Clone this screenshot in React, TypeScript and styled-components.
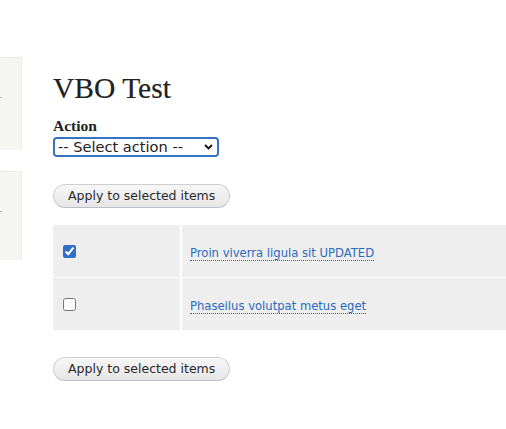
import { createGlobalStyle } from "styled-components";
import styled from "styled-components";

const GlobalStyle = createGlobalStyle`
  html, body {
    margin: 0;
    padding: 0;
    background: #ffffff;
    overflow: hidden;
  }
  body {
    font-family: "DejaVu Sans", Verdana, sans-serif;
    color: #222;
  }
`;

const Page = styled.div`
  display: flex;
  width: 506px;
  min-height: 429px;
`;

const Sidebar = styled.aside`
  width: 22px;
  flex-shrink: 0;
  display: flex;
  flex-direction: column;
  gap: 21px;
  padding-top: 57px;
`;

const Block = styled.div<{ $height: number; $mark: number }>`
  position: relative;
  height: ${({ $height }) => $height}px;
  background: #f5f5f2;
  border-top: 1px dotted #e2e2dc;
  border-right: 1px dotted #e2e2dc;

  &::after {
    content: "";
    position: absolute;
    left: 0;
    top: ${({ $mark }) => $mark}px;
    width: 2px;
    height: 1px;
    background: #b4b4b0;
  }
`;

const Main = styled.main`
  flex: 1;
  min-width: 0;
  padding: 72px 0 0 31px;
  display: flex;
  flex-direction: column;
  align-items: flex-start;
`;

const Title = styled.h1`
  margin: 0 0 12px;
  font-family: "Liberation Serif", Georgia, serif;
  font-weight: normal;
  font-size: 29.5px;
  line-height: 33px;
  color: #222;
  -webkit-text-stroke: 0.2px #222;
`;

const Label = styled.label`
  display: block;
  font-family: "Liberation Serif", Georgia, serif;
  font-weight: bold;
  font-size: 15.5px;
  line-height: 18px;
  color: #222;
  margin-bottom: 2px;
`;

const SelectWrap = styled.div`
  position: relative;
  width: 166px;
  height: 20px;
  margin-bottom: 27px;
`;

const Select = styled.select`
  appearance: none;
  box-sizing: border-box;
  width: 100%;
  height: 100%;
  margin: 0;
  padding: 0 0 0 3px;
  border: 2px solid #3673c4;
  border-radius: 4px;
  background: #fff;
  font-family: "DejaVu Sans", Verdana, sans-serif;
  font-size: 14.6px;
  line-height: 16px;
  color: #222;
  outline: none;
`;

const Chevron = styled.svg`
  position: absolute;
  right: 6px;
  top: 7px;
  width: 9px;
  height: 6px;
  pointer-events: none;
`;

const Button = styled.button`
  box-sizing: border-box;
  height: 24px;
  padding: 0 14px 1px;
  border: 1px solid #d0d0d0;
  border-bottom-color: #b9c0c7;
  border-radius: 12px;
  background: linear-gradient(#f7f7f7, #e6e6e6);
  font-family: "DejaVu Sans", Verdana, sans-serif;
  font-size: 12.5px;
  color: #2a2a2a;
  white-space: nowrap;
`;

const Table = styled.table`
  width: 100%;
  margin: 17px 0 27px;
  border-collapse: collapse;
`;

const Row = styled.tr`
  border-bottom: 1px solid #fff;
  &:last-child {
    border-bottom: none;
  }
`;

const CheckCell = styled.td`
  width: 117px;
  height: 52px;
  padding: 0 0 0 10px;
  background: #eeeeee;
  border-right: 2px solid #fff;
  vertical-align: middle;
`;

const Check = styled.input`
  display: block;
  width: 13px;
  height: 13px;
  margin: 1px 0 0;
  accent-color: #2f6fc9;
`;

const TitleCell = styled.td`
  padding: 0 0 0 8px;
  background: #eeeeee;
  vertical-align: middle;
`;

const ItemLink = styled.a`
  font-family: "DejaVu Sans", Verdana, sans-serif;
  font-size: 11.6px;
  line-height: 14px;
  color: #2b6bbf;
  text-decoration: none;
  border-bottom: 1px dotted #2b6bbf;
`;

const items = [
  { title: "Proin viverra ligula sit UPDATED", checked: true },
  { title: "Phaseilus volutpat metus eget", checked: false },
];

export default function App() {
  return (
    <>
      <GlobalStyle />
      <Page>
        <Sidebar>
          <Block $height={92} $mark={39} />
          <Block $height={88} $mark={39} />
        </Sidebar>
        <Main>
          <Title>VBO Test</Title>
          <Label htmlFor="action">Action</Label>
          <SelectWrap>
            <Select id="action" defaultValue="">
              <option value="">-- Select action --</option>
            </Select>
            <Chevron viewBox="0 0 9 6">
              <path d="M1 1 L4.5 4.5 L8 1" fill="none" stroke="#111" strokeWidth="1.8" />
            </Chevron>
          </SelectWrap>
          <Button type="button">Apply to selected items</Button>
          <Table>
            <tbody>
              {items.map((item) => (
                <Row key={item.title}>
                  <CheckCell>
                    <Check type="checkbox" defaultChecked={item.checked} />
                  </CheckCell>
                  <TitleCell>
                    <ItemLink href="#">{item.title}</ItemLink>
                  </TitleCell>
                </Row>
              ))}
            </tbody>
          </Table>
          <Button type="button">Apply to selected items</Button>
        </Main>
      </Page>
    </>
  );
}
